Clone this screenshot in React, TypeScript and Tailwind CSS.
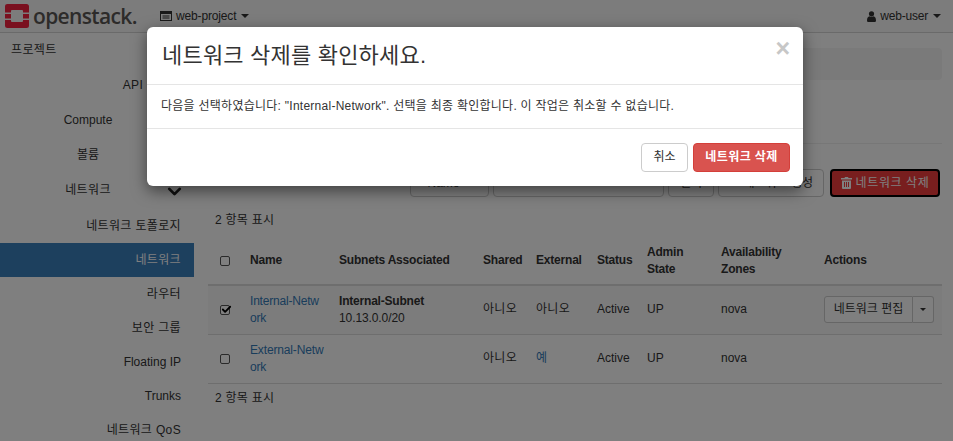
import { ChevronDown, Check } from "lucide-react";

const subItems = ["네트워크 토폴로지", "네트워크", "라우터", "보안 그룹", "Floating IP", "Trunks", "네트워크 QoS"];

function Caret() {
  return <span className="inline-block w-0 h-0 border-x-[4px] border-x-transparent border-t-[4px] border-t-current align-middle" />;
}

function Box({ checked }: { checked?: boolean }) {
  return (
    <span className="relative block w-[10px] h-[10px] mx-auto border border-[#555] rounded-[2px] bg-white">
      {checked && <Check size={11} strokeWidth={4} className="absolute -top-[2px] left-0 text-black" />}
    </span>
  );
}

function Logo() {
  return (
    <svg width="24" height="24" viewBox="0 0 24 24" className="shrink-0">
      <path
        fill="#f5203f"
        fillRule="evenodd"
        d="M2.500 0h19A2.500 2.500 0 0 1 24 2.500v6h-6V7a1 1 0 0 0-1-1H7a1 1 0 0 0-1 1v1.500H0v-6A2.500 2.500 0 0 1 2.500 0zM0 10h6v4.500H0zM18 10h6v4.500h-6zM0 16h6v1a1 1 0 0 0 1 1h10a1 1 0 0 0 1-1v-1h6v5.500a2.500 2.500 0 0 1-2.500 2.500h-19A2.500 2.500 0 0 1 0 21.500z"
      />
    </svg>
  );
}

function Trash() {
  return (
    <svg width="11" height="12" viewBox="0 0 11 12" className="shrink-0">
      <path fill="currentColor" fillRule="evenodd" d="M3.500 1 4 0h3l.5 1H11v1.500H0V1zM1 3.500h9V11a1 1 0 0 1-1 1H2a1 1 0 0 1-1-1zM3 5v5h1V5zM5 5v5h1V5zM7 5v5h1V5z" />
    </svg>
  );
}

export default function App() {
  return (
    <div className="relative w-[953px] h-[441px] overflow-hidden bg-white text-[12px] leading-[17px] text-[#333] font-['Liberation_Sans','Noto_Sans_CJK_KR',sans-serif]">
      <header className="h-[33px] border-b border-[#d5d5d5] flex items-center bg-[#f8f8f8]">
        <div className="flex items-center pl-[5px] w-[160px]">
          <Logo />
          <span className="ml-[4px] text-[21px] leading-[28px] tracking-[-0.65px] font-semibold text-[#5a5755] font-['Open_Sans',sans-serif]">openstack.</span>
        </div>
        <div className="flex items-center">
          <svg width="12" height="10" viewBox="0 0 12 10" className="text-[#333]">
            <path fill="currentColor" fillRule="evenodd" d="M0 0h12v10H0zM1 3v6h10V3zM2.500 4.500h7v1h-7zM2.500 6.500h7v1h-7z" />
          </svg>
          <span className="ml-[4px] mr-[5px] tracking-[-0.15px]">web-project</span>
          <Caret />
        </div>
        <div className="ml-auto flex items-center pr-[12px]">
          <svg width="9" height="11" viewBox="0 0 9 11" className="text-[#333]">
            <circle cx="4.500" cy="2.800" r="2.600" fill="currentColor" />
            <path fill="currentColor" d="M0 9.500C0 7 1 5.500 2.500 5.300c1.200.7 2.800.7 4 0C8 5.500 9 7 9 9.500 9 10.500 8.300 11 7.500 11h-6C.7 11 0 10.500 0 9.500z" />
          </svg>
          <span className="ml-[4px] mr-[5px] tracking-[-0.2px]">web-user</span>
          <Caret />
        </div>
      </header>

      <div className="flex">
        <nav className="w-[194px] shrink-0 pt-[9px] tracking-[0.35px]">
          <div className="pl-[11px] h-[17px]">프로젝트</div>
          <div className="h-[19px] mb-[16px] mt-[18px] text-right pr-[13px]">API 액세스</div>
          {["Compute", "볼륨"].map((t) => (
            <div key={t} className="h-[35px] text-center pr-[18px] tracking-normal">{t}</div>
          ))}
          <div className="relative h-[27px] text-center pr-[18px]">
            네트워크
            <ChevronDown size={21} strokeWidth={3.200} className="absolute left-[164px] -top-[1px] text-[#222]" />
          </div>
          {subItems.map((t) => (
            <div
              key={t}
              className={`h-[34px] flex items-center justify-end pr-[13px] ${t === "네트워크" ? "bg-[#3a80bd] text-white" : ""} ${t === "Floating IP" || t === "Trunks" ? "tracking-normal" : ""}`}
            >
              {t}
            </div>
          ))}
        </nav>

        <main className="flex-1 pl-[14px] pr-[11px] pt-[15px]">
          <div className="h-[32px] rounded-[4px] bg-[#f5f5f5]" />
          <div className="h-[64px] border-b border-[#eee]" />
          <div className="mt-[25px] flex justify-end pr-[2px] gap-[4px] h-[28px]">
            <div className="w-[79px] border border-[#ccc] rounded-[4px] flex items-center justify-center gap-1">Name <Caret /></div>
            <div className="w-[171px] border border-[#ccc] rounded-[4px]" />
            <div className="w-[46px] border border-[#ccc] rounded-[4px] flex items-center justify-center">필터</div>
            <div className="w-[106px] border border-[#ccc] rounded-[4px] flex items-center justify-end pr-[10px]">+ 네트워크 생성</div>
            <div className="ml-[2px] w-[110px] rounded-[4px] bg-[#f03c3c] border-2 border-black text-white flex items-center justify-center gap-[4px]">
              <Trash />
              <span className="tracking-[0.6px]">네트워크 삭제</span>
            </div>
          </div>
          <div className="mt-[15px] pl-[7px] h-[17px] tracking-[0.25px]">2 항목 표시</div>
          <table className="mt-[8px] w-[734px] table-fixed border-collapse">
            <colgroup>
              <col className="w-[34px]" />
              <col className="w-[89px]" />
              <col className="w-[144px]" />
              <col className="w-[53px]" />
              <col className="w-[61px]" />
              <col className="w-[50px]" />
              <col className="w-[74px]" />
              <col className="w-[103px]" />
              <col className="w-[126px]" />
            </colgroup>
            <thead>
              <tr className="h-[48px] border-b-2 border-[#ddd] text-left">
                <th><Box /></th>
                {["Name", "Subnets Associated", "Shared", "External", "Status", "Admin State", "Availability Zones", "Actions"].map((h) => (
                  <th key={h} className="px-[8px] font-bold tracking-[-0.2px]">{h}</th>
                ))}
              </tr>
            </thead>
            <tbody>
              <tr className="h-[49px] border-b border-[#ddd] bg-[#f9f9f9]">
                <td><Box checked /></td>
                <td className="pl-[8px] whitespace-nowrap tracking-[-0.2px] text-[#337ab7]">Internal-Netw<br />ork</td>
                <td className="px-[8px]"><div className="font-bold tracking-[-0.2px]">Internal-Subnet</div><div className="tracking-[-0.1px]">10.13.0.0/20</div></td>
                <td className="px-[8px] tracking-[0.3px]">아니오</td>
                <td className="px-[8px] tracking-[0.3px]">아니오</td>
                <td className="px-[8px]">Active</td>
                <td className="px-[8px]">UP</td>
                <td className="px-[8px]">nova</td>
                <td className="px-[8px]">
                  <div className="flex h-[27px] w-[110px]">
                    <div className="flex-1 border border-[#ccc] rounded-l-[3px] flex items-center justify-center bg-white">네트워크 편집</div>
                    <div className="w-[21px] border border-l-0 border-[#ccc] rounded-r-[3px] flex items-center justify-center bg-white">
                      <span className="inline-block w-0 h-0 border-x-[3px] border-x-transparent border-t-[3px] border-t-current" />
                    </div>
                  </div>
                </td>
              </tr>
              <tr className="h-[49px] border-b border-[#ddd]">
                <td><Box /></td>
                <td className="pl-[8px] whitespace-nowrap tracking-[-0.15px] text-[#337ab7]">External-Netw<br />ork</td>
                <td className="px-[8px]" />
                <td className="px-[8px] tracking-[0.3px]">아니오</td>
                <td className="px-[8px] text-[#337ab7]">예</td>
                <td className="px-[8px]">Active</td>
                <td className="px-[8px]">UP</td>
                <td className="px-[8px]">nova</td>
                <td />
              </tr>
            </tbody>
          </table>
          <div className="mt-[6px] pl-[7px] tracking-[0.25px]">2 항목 표시</div>
        </main>
      </div>

      <div className="absolute inset-0 bg-black/50" />

      <div className="absolute left-[147px] top-[27px] w-[656px] h-[159px] rounded-[6px] bg-white shadow-[0_5px_15px_rgba(0,0,0,0.5)]">
        <div className="relative h-[58px] border-b border-[#e5e5e5] pl-[15px] pt-[14px]">
          <div className="text-[22px] leading-[29px] tracking-[0.2px] text-[#333]">네트워크 삭제를 확인하세요.</div>
          <span className="absolute right-[13px] top-[8px] text-[25px] leading-[27px] font-bold text-[#c7c7c7]">×</span>
        </div>
        <div className="h-[44px] border-b border-[#e5e5e5] px-[14px] pt-[13px] tracking-[0.26px]">
          다음을 선택하였습니다: "Internal-Network". 선택을 최종 확인합니다. 이 작업은 취소할 수 없습니다.
        </div>
        <div className="flex justify-end gap-[5px] pt-[14px] pr-[13px]">
          <div className="w-[47px] h-[29px] border border-[#ccc] rounded-[4px] flex items-center justify-center">취소</div>
          <div className="w-[97px] h-[29px] rounded-[4px] bg-[#d9534f] border border-[#d43f3a] text-white font-bold tracking-[0.4px] flex items-center justify-center">네트워크 삭제</div>
        </div>
      </div>
    </div>
  );
}
